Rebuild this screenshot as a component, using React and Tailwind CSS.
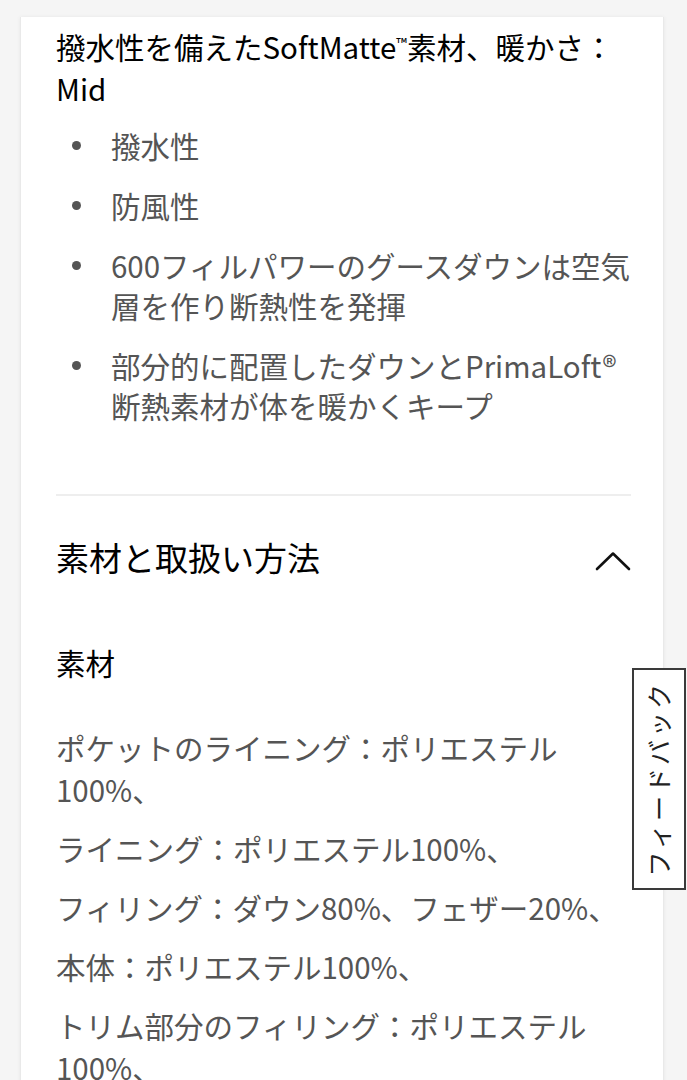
import React from 'react';

const features = [
  ['撥水性'],
  ['防風性'],
  ['600フィルパワーのグースダウンは空気', '層を作り断熱性を発揮'],
  ['部分的に配置したダウンとPrimaLoft®', '断熱素材が体を暖かくキープ'],
];

const materials = [
  ['ポケットのライニング：ポリエステル', '100%、'],
  ['ライニング：ポリエステル100%、'],
  ['フィリング：ダウン80%、フェザー20%、'],
  ['本体：ポリエステル100%、'],
  ['トリム部分のフィリング：ポリエステル', '100%、'],
];

const ChevronUp = () => (
  <svg width="36" height="20" viewBox="0 0 36 20" fill="none" className="shrink-0">
    <polyline points="2,18 18,2.5 34,18" stroke="#111" strokeWidth="2.6" strokeLinecap="round" strokeLinejoin="round" />
  </svg>
);

const App = () => {
  return (
    <div
      className="relative h-screen overflow-hidden bg-[#f5f5f5] pt-[17px]"
      style={{ fontFamily: '"Noto Sans CJK JP", "Noto Sans", sans-serif' }}
    >
      <div className="ml-[20px] w-[644px] min-h-full bg-white border-l border-r border-[#e9e9e9] shadow-[0_0_4px_rgba(0,0,0,0.06)] pl-[35px] pr-[32px] pt-[5px]">
        {/* feature block */}
        <h3 className="text-[29.5px] leading-[42px] font-normal text-black">
          撥水性を備えたSoftMatte<span className="text-[15px] align-[10px]">™</span>素材、暖かさ：
          <br />
          Mid
        </h3>
        <ul className="mt-[16px] flex flex-col gap-[20px]">
          {features.map((lines, i) => (
            <li key={i} className="flex items-start">
              <span className="ml-[16px] mt-[16px] w-[9px] h-[9px] rounded-full bg-[#555] shrink-0" />
              <span className="ml-[30px] text-[29.5px] leading-[40px] text-[#555]">
                {lines.map((l, j) => (
                  <span key={j} className="block">{l}</span>
                ))}
              </span>
            </li>
          ))}
        </ul>

        <div className="mt-[69px] h-[2px] bg-[#eeeeee]" />

        {/* accordion header */}
        <div className="flex items-center justify-between pt-[38px] pb-[57px]">
          <h2 className="text-[33px] leading-[46px] font-normal text-black">素材と取扱い方法</h2>
          <div className="mt-[8px]">
            <ChevronUp />
          </div>
        </div>

        <div className="mt-[4px]">
          <h4 className="text-[29.5px] leading-[42px] font-normal text-black">素材</h4>
          <div className="mt-[43px] flex flex-col gap-[17px]">
            {materials.map((lines, i) => (
              <p key={i} className="text-[29.5px] leading-[42px] text-[#555]">
                {lines.map((l, j) => (
                  <span key={j} className="block">{l}</span>
                ))}
              </p>
            ))}
          </div>
        </div>
      </div>

      {/* feedback tab */}
      <button className="absolute left-[632px] top-[668px] w-[54px] h-[222px] bg-white border-2 border-[#3a3a3a] flex items-center justify-center">
        <span className="[writing-mode:vertical-rl] [text-orientation:sideways] rotate-180 text-[25px] tracking-[3px] text-[#222]">
          フィードバック
        </span>
      </button>
    </div>
  );
};

export default App;
